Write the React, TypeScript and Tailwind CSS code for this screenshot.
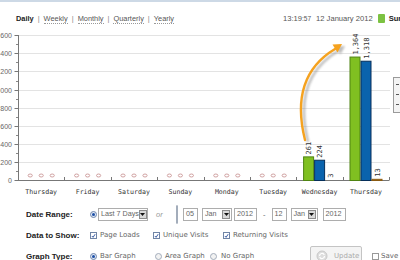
import React from "react";

const B = 180;
const S = 18.1 / 200;
const X0 = 18;
const CW = 46.4;
const days = ["Thursday", "Friday", "Saturday", "Sunday", "Monday", "Tuesday", "Wednesday", "Thursday"];
const yLabels = ["0", "200", "400", "600", "800", "000", "200", "400", "600"];
const data: Record<number, number[]> = { 6: [261, 224, 3], 7: [1364, 1318, 13] };
const fills = ["#80c021", "#0a63ad", "#d08a2a"];
const strokes = ["#4f8412", "#062f5a", "#8a5a10"];

function Chart() {
  const grid = Array.from({ length: 9 }, (_, k) => Math.round(B - k * 18.1) + 0.5);
  return (
    <svg width={400} height={176} viewBox="0 28 400 176" className="block">
      <defs>
        <filter id="sh" x="-50%" y="-50%" width="200%" height="200%">
          <feGaussianBlur stdDeviation="1.3" />
        </filter>
      </defs>
      {grid.slice(1).map((y, i) => (
        <line key={i} x1={19} x2={390} y1={y} y2={y} stroke="#e3e3e3" strokeWidth={1} />
      ))}
      {grid.map((y, i) => (
        <g key={i}>
          <line x1={14.5} x2={18} y1={y} y2={y} stroke="#777" strokeWidth={1} />
          <text x={12} y={y + 2.5} fontSize={7} fill="#666" textAnchor="end" fontFamily="Liberation Sans, Arial, sans-serif">
            {yLabels[i]}
          </text>
          {i < 8 && <line x1={16} x2={18} y1={y - 9} y2={y - 9} stroke="#888" strokeWidth={1} />}
        </g>
      ))}
      <line x1={18.5} x2={18.5} y1={35} y2={181} stroke="#777" strokeWidth={1} />
      <line x1={18} x2={389.5} y1={180.5} y2={180.5} stroke="#777" strokeWidth={1} />
      {Array.from({ length: 9 }, (_, i) => {
        const x = Math.round(X0 + i * CW) + 0.5;
        return <line key={i} x1={x} x2={x} y1={177} y2={180} stroke="#777" strokeWidth={1} />;
      })}
      {days.map((d, i) => {
        const c = X0 + i * CW + CW / 2;
        return (
          <g key={i}>
            <text x={c} y={193.5} fontSize={6.6} fill="#333" textAnchor="middle" fontFamily="DejaVu Sans Mono, monospace">
              {d}
            </text>
            {!data[i] &&
              [-11, 0, 11].map((o) => (
                <ellipse key={o} cx={c + o} cy={175.5} rx={2.1} ry={1.5} fill="#fff" stroke="#c48a8a" strokeWidth={0.8} />
              ))}
            {data[i] &&
              data[i].map((v, j) => {
                const x = c - 16.5 + j * 11;
                const h = v * S;
                return (
                  <g key={j}>
                    {h > 0.6 && (
                      <rect x={x + 0.5} y={B - h + 0.5} width={10} height={h} fill={fills[j]} stroke={strokes[j]} strokeWidth={1} />
                    )}
                    <text
                      transform={`translate(${x + 8},${B - h - 2}) rotate(-90)`}
                      fontSize={7}
                      fill="#333"
                      fontFamily="DejaVu Sans Mono, monospace"
                    >
                      {v.toLocaleString("en-US")}
                    </text>
                  </g>
                );
              })}
          </g>
        );
      })}
      <g filter="url(#sh)" opacity={0.55} transform="translate(3,2)">
        <path d="M305 140 C 296 104, 300 70, 335 49" fill="none" stroke="#888" strokeWidth={2.6} />
        <polygon points="342,44 337.5,52.5 332.5,44.4" fill="#888" />
      </g>
      <path d="M305 140 C 296 104, 300 70, 335 49" fill="none" stroke="#f5a21f" strokeWidth={2.4} strokeLinecap="round" />
      <polygon points="342,44 337.5,52.5 332.5,44.4" fill="#f5a21f" />
      <rect x={393.5} y={77.5} width={20} height={35} fill="#f3f3f3" stroke="#9a9a9a" />
      <line x1={396} x2={399} y1={84.5} y2={84.5} stroke="#555" />
      <line x1={396} x2={399} y1={94.5} y2={94.5} stroke="#555" />
      <line x1={396} x2={399} y1={104.5} y2={104.5} stroke="#555" />
    </svg>
  );
}

function Radio({ on }: { on?: boolean }) {
  return on ? (
    <span className="flex h-[7px] w-[7px] shrink-0 items-center justify-center rounded-full border border-[#6f86ad] bg-[#dfe8f5]">
      <span className="h-[3px] w-[3px] rounded-full bg-[#1d4fa6]" />
    </span>
  ) : (
    <span className="h-[7px] w-[7px] shrink-0 rounded-full border border-[#a3adbb] bg-[#f2f2f2]" />
  );
}

function Check({ on = true }: { on?: boolean }) {
  return (
    <span className="flex h-[7px] w-[7px] shrink-0 items-center justify-center border border-[#7085a6] bg-white">
      {on && (
        <svg width="6" height="6" viewBox="0 0 6 6">
          <path d="M1 3 L2.5 4.6 L5 0.8" fill="none" stroke="#2a4f9c" strokeWidth="1.1" />
        </svg>
      )}
    </span>
  );
}

function DropBtn() {
  return (
    <span className="ml-auto flex h-[9px] w-[8px] shrink-0 items-center justify-center border border-[#8c8c8c] bg-[#d9d9d9]">
      <svg width="5" height="3" viewBox="0 0 5 3">
        <polygon points="0,0 5,0 2.5,3" fill="#111" />
      </svg>
    </span>
  );
}

function Box({ w, children, drop }: { w: string; children: React.ReactNode; drop?: boolean }) {
  return (
    <span
      className={`flex h-[13px] shrink-0 items-center overflow-hidden whitespace-nowrap border border-[#adadad] bg-white pl-[2px] pr-[1px] text-[7.2px] text-[#666] ${w}`}
    >
      <span>{children}</span>
      {drop && <DropBtn />}
    </span>
  );
}

export default function App() {
  return (
    <div className="relative h-[260px] w-[400px] overflow-hidden border-t-2 border-[#cdd9e6] bg-white font-['Liberation_Sans',Arial,sans-serif]">
      <div className="flex h-[26px] items-center overflow-hidden whitespace-nowrap pt-[8px] text-[7.4px]">
        <div className="flex w-[283px] shrink-0 items-center pl-[16px]">
          <span className="font-bold text-[#222]">Daily</span>
          <span className="mx-[4px] text-[#888]">|</span>
          <span className="border-b border-dotted border-[#999] leading-[9px] text-[#555]">Weekly</span>
          <span className="mx-[4px] text-[#888]">|</span>
          <span className="border-b border-dotted border-[#999] leading-[9px] text-[#555]">Monthly</span>
          <span className="mx-[4px] text-[#888]">|</span>
          <span className="border-b border-dotted border-[#999] leading-[9px] text-[#555]">Quarterly</span>
          <span className="mx-[4px] text-[#888]">|</span>
          <span className="border-b border-dotted border-[#999] leading-[9px] text-[#555]">Yearly</span>
        </div>
        <div className="flex shrink-0 items-center text-[7.6px] text-[#555]">
          <span>
            13:19<span className="text-[6.5px]">:57</span>
          </span>
          <span className="ml-[5px]">12 January 2012</span>
          <span className="ml-[5px] h-[9px] w-[7px] rounded-[1px] bg-[#7cc242]" />
          <span className="ml-[4px] font-bold text-[#222]">Summary</span>
        </div>
      </div>
      <Chart />
      <div className="pl-[26px] text-[#222]">
        <div className="flex h-[21px] items-center">
          <div className="w-[64px] shrink-0 text-[8px] font-bold">Date Range:</div>
          <Radio on />
          <span className="ml-[1px]">
            <Box w="w-[50px]" drop>
              Last 7 Days
            </Box>
          </span>
          <span className="ml-[8px] w-[8px] text-[7.5px] italic text-[#999]">or</span>
          <span className="ml-[12px]">
            <Radio />
          </span>
          <span className="ml-[5px]">
            <Box w="w-[15px]">05</Box>
          </span>
          <span className="ml-[4px]">
            <Box w="w-[30px]" drop>
              Jan
            </Box>
          </span>
          <span className="ml-[2px]">
            <Box w="w-[23px]">2012</Box>
          </span>
          <span className="ml-[6px] text-[7.5px] text-[#666]">-</span>
          <span className="ml-[6px]">
            <Box w="w-[15px]">12</Box>
          </span>
          <span className="ml-[4px]">
            <Box w="w-[27px]" drop>
              Jan
            </Box>
          </span>
          <span className="ml-[5px]">
            <Box w="w-[23px]">2012</Box>
          </span>
        </div>
        <div className="flex h-[21px] items-center font-['DejaVu_Sans',Verdana,sans-serif] text-[7px] text-[#666]">
          <div className="w-[64px] shrink-0 font-['Liberation_Sans',Arial,sans-serif] text-[8px] font-bold text-[#222]">Data to Show:</div>
          <div className="flex w-[63px] shrink-0 items-center">
            <Check />
            <span className="ml-[3px]">Page Loads</span>
          </div>
          <div className="flex w-[70px] shrink-0 items-center">
            <Check />
            <span className="ml-[3px]">Unique Visits</span>
          </div>
          <div className="flex shrink-0 items-center">
            <Check />
            <span className="ml-[3px]">Returning Visits</span>
          </div>
        </div>
        <div className="flex h-[21px] items-center whitespace-nowrap font-['DejaVu_Sans',Verdana,sans-serif] text-[7px] text-[#666]">
          <div className="w-[64px] shrink-0 font-['Liberation_Sans',Arial,sans-serif] text-[8px] font-bold text-[#222]">Graph Type:</div>
          <div className="flex w-[65px] shrink-0 items-center">
            <Radio on />
            <span className="ml-[3px]">Bar Graph</span>
          </div>
          <div className="flex w-[55px] shrink-0 items-center">
            <Radio />
            <span className="ml-[3px]">Area Graph</span>
          </div>
          <div className="flex w-[100px] shrink-0 items-center">
            <Radio />
            <span className="ml-[4px]">No Graph</span>
          </div>
          <div className="flex h-[20px] w-[52px] shrink-0 items-center self-start rounded-[2px] border border-[#c4c4c4] bg-[#f4f4f4] pl-[5px] text-[7px] text-[#aaa]">
            <svg width="12" height="12" viewBox="0 0 12 12">
              <circle cx="6" cy="6" r="5" fill="#ddd" stroke="#c8c8c8" />
              <path d="M3.5 6 A2.5 2.5 0 0 1 8.3 5" fill="none" stroke="#fff" strokeWidth="1.2" />
              <path d="M8.5 6 A2.5 2.5 0 0 1 3.7 7" fill="none" stroke="#fff" strokeWidth="1.2" />
            </svg>
            <span className="ml-[6px]">Update</span>
          </div>
          <div className="ml-[10px] flex shrink-0 items-center">
            <span className="h-[7px] w-[7px] border border-[#999] bg-white" />
            <span className="ml-[2px]">Save</span>
          </div>
        </div>
      </div>
    </div>
  );
}
